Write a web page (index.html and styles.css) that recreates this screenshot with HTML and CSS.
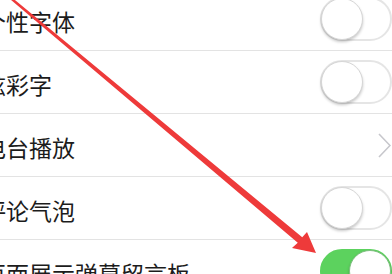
FILE: index.html
```html
<!DOCTYPE html>
<html lang="zh">
<head>
<meta charset="utf-8">
<link rel="stylesheet" href="styles.css">
</head>
<body>
<div class="screen">
  <ul class="list">
    <li class="row"><span class="label">个性字体</span><span class="switch"><span class="knob"></span></span></li>
    <li class="row"><span class="label">炫彩字</span><span class="switch"><span class="knob"></span></span></li>
    <li class="row"><span class="label">电台播放</span>
      <svg class="chevron" viewBox="0 0 13 25" width="13" height="25"><path d="M1 1 L12 12.5 L1 24" fill="none" stroke="#c7c7cc" stroke-width="1.6"/></svg>
    </li>
    <li class="row"><span class="label">评论气泡</span><span class="switch"><span class="knob"></span></span></li>
    <li class="row"><span class="label">页面展示弹幕留言板</span><span class="switch on"><span class="knob"></span></span></li>
  </ul>
  <svg class="arrow" viewBox="0 0 392 274" width="392" height="274">
    <polygon points="7.77,-5.92 302.24,237.31 307,232 316,253 292,248 297.76,242.69 6.23,-4.08" fill="#ee3a3a"/>
  </svg>
</div>
</body>
</html>
```
FILE: styles.css
```css
html, body {
  margin: 0;
  padding: 0;
  background: #ffffff;
}
.screen {
  position: relative;
  width: 392px;
  height: 274px;
  overflow: hidden;
  background: #ffffff;
  font-family: "Noto Sans CJK SC", "Noto Sans", sans-serif;
}
.list {
  list-style: none;
  margin: -12px 0 0 0;
  padding: 0;
}
.row {
  display: flex;
  align-items: center;
  height: 62px;
  border-bottom: 1px solid #e3e3e3;
}
.label {
  flex: 1;
  margin-left: -17px;
  padding-top: 4px;
  font-size: 23px;
  color: #1c1c1c;
  white-space: nowrap;
}
.switch {
  display: flex;
  align-items: center;
  justify-content: flex-start;
  width: 72px;
  height: 44px;
  box-sizing: border-box;
  border: 2px solid #e5e5e5;
  border-radius: 22px;
  background: #ffffff;
  flex-shrink: 0;
}
.switch.on {
  justify-content: flex-end;
  background: #5cd25e;
  border-color: #5cd25e;
}
.knob {
  width: 42px;
  height: 42px;
  margin: -1px;
  border-radius: 50%;
  background: #ffffff;
  box-sizing: border-box;
  border: 1px solid #d6d6d6;
  box-shadow: 0 2px 3px rgba(0, 0, 0, 0.22);
}
.switch.on .knob {
  border-color: #7fbf80;
}
.chevron {
  margin-right: 1px;
  flex-shrink: 0;
}
.arrow {
  position: absolute;
  left: 0;
  top: 0;
  pointer-events: none;
}
```
